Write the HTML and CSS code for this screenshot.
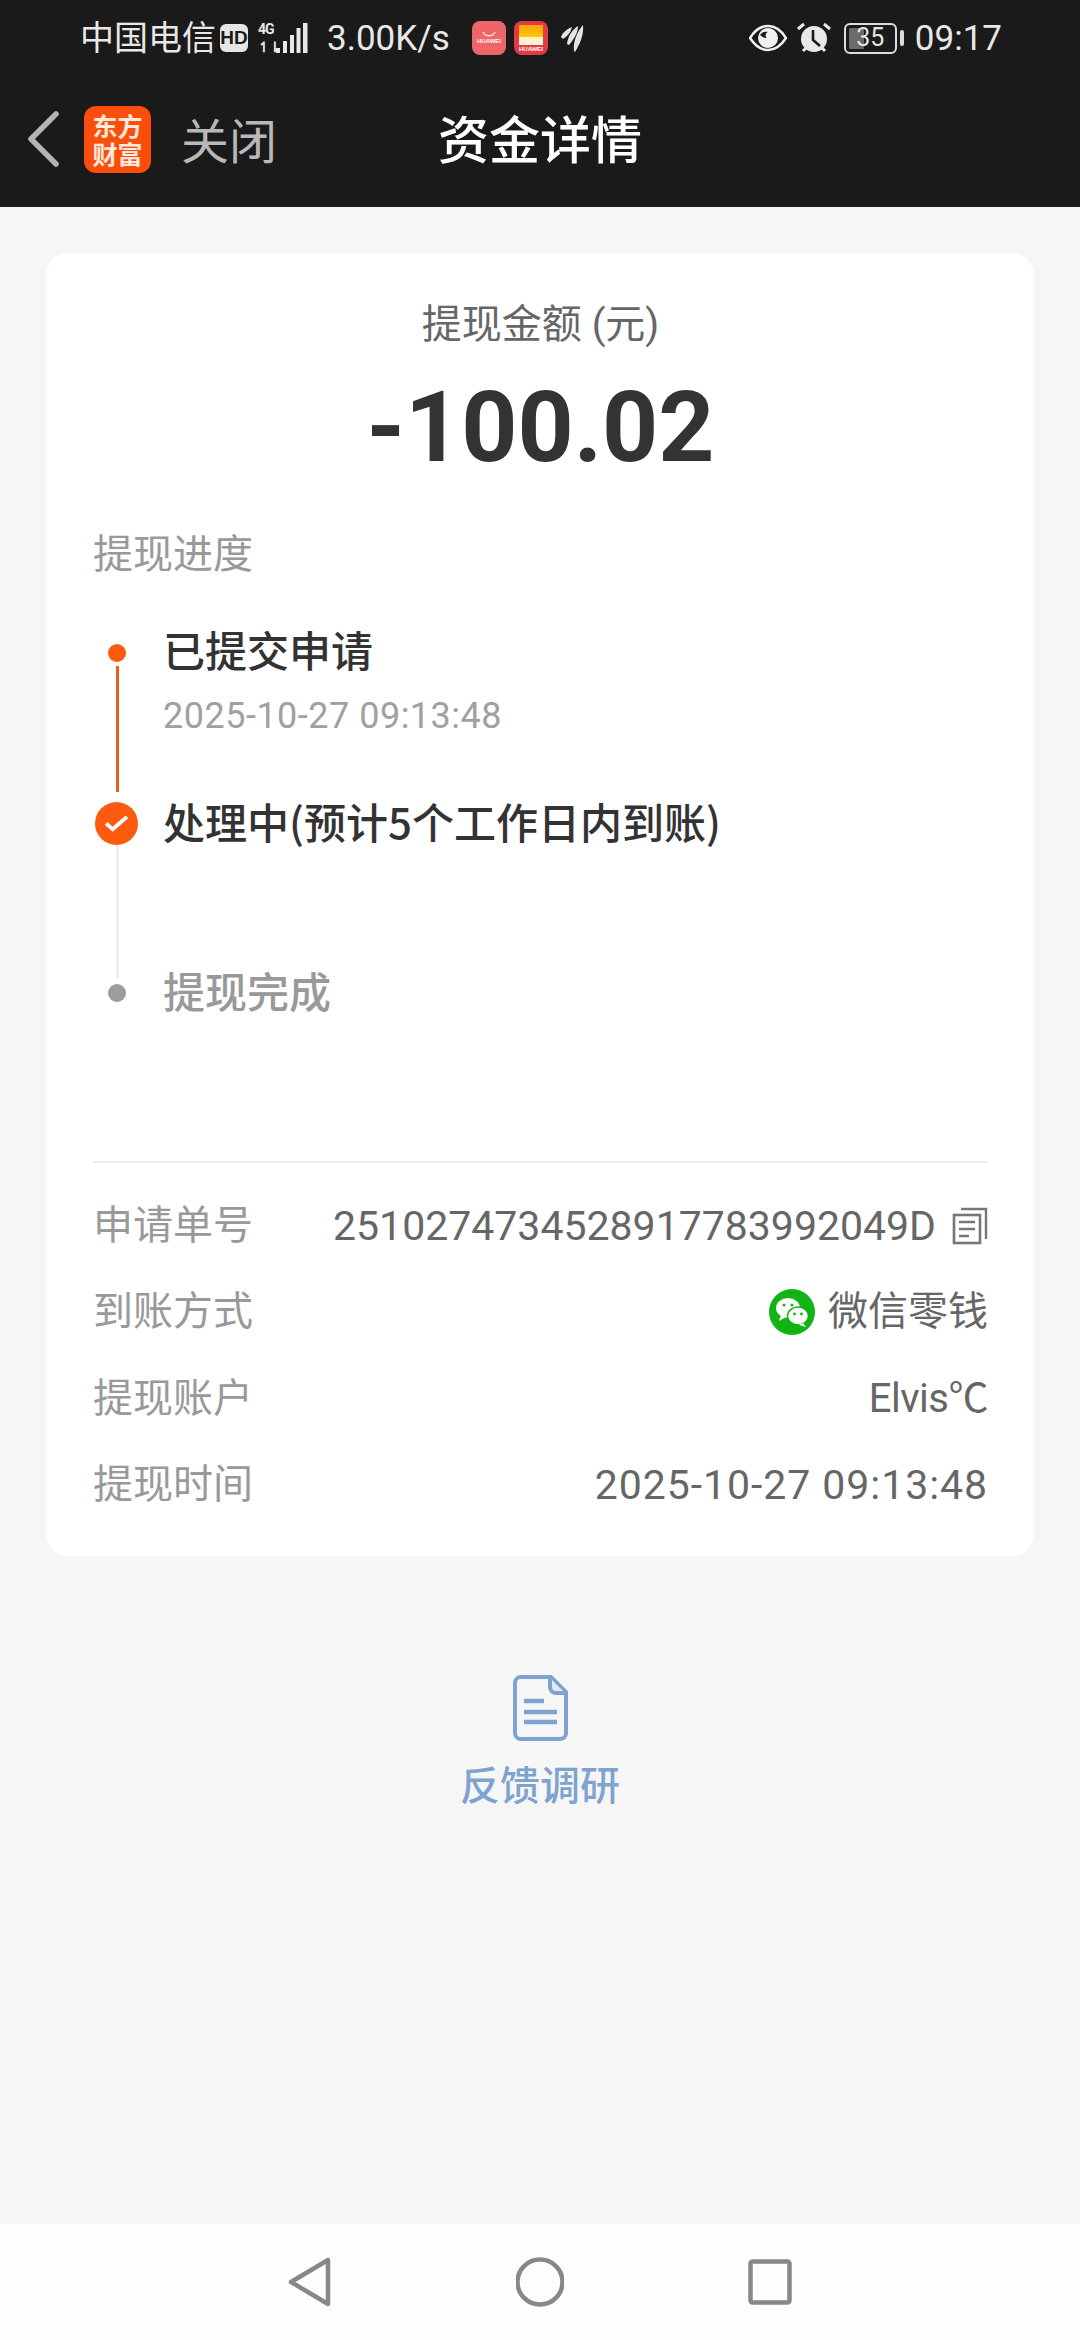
FILE: index.html
```html
<!DOCTYPE html>
<html lang="zh-CN">
<head>
<meta charset="utf-8">
<title>资金详情</title>
<link rel="stylesheet" href="styles.css">
</head>
<body>
<div class="page">
  <header class="header">
    <div class="status">
      <div class="status-left">
        <span class="carrier">中国电信</span>
        <span class="hd">HD</span>
        <span class="net"><span class="net-label"><i>4G</i><i>↿⇂</i></span>
          <svg class="bars" width="32" height="32" viewBox="0 0 32 32"><path d="M0 26h4v5H0zM7 19h4v12H7zM14 13h4v18h-4zM20.500 6h4v25h-4zM27 1h4.500v30H27z" fill="#e8e8e8"/></svg>
        </span>
        <span class="speed">3.00K/s</span>
        <span class="app app-red"><svg width="14" height="6" viewBox="0 0 14 6"><path d="M1 1c2 5 10 5 12 0" fill="none" stroke="#ffd5d5" stroke-width="1.500"/></svg><span class="app-label">HUAWEI</span></span>
        <span class="app app-wallet"><span class="wallet-band"></span><span class="app-label">HUAWEI</span></span>
        <svg class="feather" width="24" height="30" viewBox="0 0 24 30"><path d="M1 14C3 9 7 6 12 4c-1 5-4 9-9 12zM7 21C8 13 12 7 18 3c0 7-4 13-9 19zM14 28c-1-10 3-19 9-26 1 10-3 19-8 27z" fill="#e4e4e4"/></svg>
      </div>
      <div class="status-right">
        <svg width="38" height="28" viewBox="0 0 38 28"><path d="M1 14C6 6 12 2 19 2s13 4 18 12c-5 8-11 12-18 12S6 22 1 14z" fill="none" stroke="#f0f0f0" stroke-width="2.600"/><circle cx="19" cy="14" r="10" fill="#f0f0f0"/><path d="M11 11c2-3 5-4 8-3-3 1-3 5-1 6-3 0-5-1-7-3z" fill="#1a1a1a"/></svg>
        <svg class="alarm" width="36" height="34" viewBox="0 0 36 34"><circle cx="18" cy="18" r="13" fill="#e8e8e8"/><path d="M17 9v10l7 6" fill="none" stroke="#1a1a1a" stroke-width="2.600"/><path d="M2 8l6-5M34 8l-6-5M7 30l3-3M29 30l-3-3" stroke="#e8e8e8" stroke-width="3"/></svg>
        <span class="battery"><span class="battery-body"><span class="battery-fill"></span><span class="battery-num">35</span></span><span class="battery-tip"></span></span>
        <span class="clock">09:17</span>
      </div>
    </div>
    <nav class="nav">
      <svg class="back" width="34" height="58" viewBox="0 0 34 58"><path d="M30 4L5 29l25 25" fill="none" stroke="#b4b4b4" stroke-width="5.500" stroke-linecap="round" stroke-linejoin="round"/></svg>
      <span class="logo">东方<br>财富</span>
      <span class="close">关闭</span>
      <h1 class="title">资金详情</h1>
    </nav>
  </header>

  <main class="main">
    <section class="card">
      <div class="amount-label">提现金额 (元)</div>
      <div class="amount">-100.02</div>
      <div class="progress-label">提现进度</div>
      <ol class="steps">
        <li class="step step-done">
          <span class="rail"><span class="dot dot-orange"></span><span class="line line-orange"></span></span>
          <div class="step-text"><div class="step-title">已提交申请</div><div class="step-time">2025-10-27 09:13:48</div></div>
        </li>
        <li class="step step-current">
          <span class="rail"><span class="check"><svg width="26" height="20" viewBox="0 0 26 20"><path d="M2 10l7 6L24 3" fill="none" stroke="#fff" stroke-width="4"/></svg></span><span class="line line-gray"></span></span>
          <div class="step-text"><div class="step-title">处理中(预计5个工作日内到账)</div></div>
        </li>
        <li class="step step-todo">
          <span class="rail"><span class="dot dot-gray"></span></span>
          <div class="step-text"><div class="step-title muted">提现完成</div></div>
        </li>
      </ol>
      <dl class="details">
        <div class="row"><dt>申请单号</dt><dd class="order">2510274734528917783992049D
          <svg class="copy" width="36" height="38" viewBox="0 0 36 38"><path d="M9 2h25v30" fill="none" stroke="#777" stroke-width="2.400"/><rect x="2" y="8" width="26" height="28" fill="none" stroke="#777" stroke-width="2.600"/><path d="M7 15h16M7 22h16M7 29h10" stroke="#777" stroke-width="2.400"/></svg></dd></div>
        <div class="row"><dt>到账方式</dt><dd>
          <svg class="wechat" width="46" height="46" viewBox="0 0 46 46"><circle cx="23" cy="23" r="23" fill="#12b312"/><ellipse cx="19" cy="19" rx="12" ry="10" fill="#fff"/><path d="M12 26l-2 6 7-4z" fill="#fff"/><ellipse cx="29" cy="27" rx="10.500" ry="9" fill="#fff" stroke="#12b312" stroke-width="1.500"/><path d="M34 34l3 4-7-2z" fill="#fff"/><circle cx="15" cy="16" r="1.500" fill="#12b312"/><circle cx="23" cy="16" r="1.500" fill="#12b312"/><circle cx="25.500" cy="25" r="1.400" fill="#12b312"/><circle cx="32.500" cy="25" r="1.400" fill="#12b312"/></svg>
          微信零钱</dd></div>
        <div class="row"><dt>提现账户</dt><dd class="account">Elvis℃</dd></div>
        <div class="row"><dt>提现时间</dt><dd class="date">2025-10-27 09:13:48</dd></div>
      </dl>
    </section>
    <div class="survey">
      <svg width="56" height="66" viewBox="0 0 56 66"><path d="M9 2h30l15 15v41a6 6 0 0 1-6 6H9a6 6 0 0 1-6-6V8a6 6 0 0 1 6-6z" fill="none" stroke="#7fa3cf" stroke-width="4"/><path d="M38 3v9a6 6 0 0 0 6 6h9" fill="#e4ebf4" stroke="#7fa3cf" stroke-width="4"/><path d="M12 26h20M12 37h33M12 47h33" stroke="#7fa3cf" stroke-width="4.500"/></svg>
      <span class="survey-label">反馈调研</span>
    </div>
  </main>

  <footer class="softkeys">
    <svg width="44" height="50" viewBox="0 0 44 50"><path d="M3 25L40 3v44z" fill="none" stroke="#888" stroke-width="4.500" stroke-linejoin="round"/></svg>
    <svg width="48" height="50" viewBox="0 0 48 50"><circle cx="24" cy="25" r="22.500" fill="none" stroke="#888" stroke-width="4.500"/></svg>
    <svg width="44" height="46" viewBox="0 0 44 46"><rect x="2.500" y="2.500" width="39" height="41" rx="2" fill="none" stroke="#888" stroke-width="4.500"/></svg>
  </footer>
</div>
</body>
</html>
```
FILE: styles.css
```css
* { box-sizing: border-box; }
html, body { margin: 0; padding: 0; }
body {
  width: 1080px;
  height: 2340px;
  overflow: hidden;
  font-family: Roboto, "Noto Sans CJK SC", sans-serif;
  color: #333;
  background: #f6f6f6;
}
.page { display: flex; flex-direction: column; height: 2340px; }

.header { height: 207px; background: #1a1a1a; flex: none; }
.status {
  height: 74px;
  padding: 2px 78px 0 80px;
  display: flex;
  justify-content: space-between;
  align-items: center;
  color: #e8e8e8;
}
.status-left, .status-right { display: flex; align-items: center; }
.carrier { font-size: 34px; line-height: 40px; width: 136px; white-space: nowrap; }
.hd {
  width: 28px; height: 28px; margin-left: 4px;
  background: #e6e6e6; color: #1a1a1a;
  border-radius: 6px;
  font: 700 19px/28px "Liberation Sans", sans-serif;
  text-align: center;
}
.net { display: flex; align-items: center; margin-left: 10px; }
.net-label { display: flex; flex-direction: column; gap: 4px; font-size: 14px; line-height: 14px; font-weight: 700; width: 18px; }
.net-label i { font-style: normal; letter-spacing: -1px; white-space: nowrap; }
.bars { margin-left: 0; }
.speed { font-size: 35px; margin-left: 19px; width: 124px; white-space: nowrap; }
.app {
  width: 34px; height: 34px; margin-left: 21px;
  border-radius: 8px;
  display: flex; flex-direction: column; justify-content: flex-end; align-items: center;
  overflow: hidden;
}
.app + .app { margin-left: 8px; }
.app-red { background: #ef6668; justify-content: center; }
.app-wallet { background: #e63946; padding-top: 4px; justify-content: flex-start; }
.wallet-band { width: 24px; height: 20px; background: linear-gradient(#fca311 0, #ffc800 60%, #fff3cf 60%); }
.app-label { font: 700 6px/8px "Liberation Sans", sans-serif; color: #fff; }
.feather { margin-left: 12px; }
.status-right svg { margin-right: 9px; }
.status-right .alarm { margin-right: 12px; }
.battery { display: flex; align-items: center; margin-right: 11px; }
.battery-body {
  width: 53px; height: 31px;
  border: 2.5px solid #ddd; border-radius: 6px;
  position: relative;
  display: flex; align-items: center; justify-content: center;
}
.battery-fill { position: absolute; left: 3px; top: 3px; bottom: 3px; width: 15px; background: #6a6a6a; border-radius: 1px; }
.battery-num { position: relative; font-size: 25px; line-height: 28px; color: #e4e4e4; }
.battery-tip { width: 4px; height: 16px; margin-left: 3px; background: #ddd; border-radius: 2px; }
.clock { font-size: 35px; color: #e8e8e8; }

.nav { height: 133px; position: relative; display: flex; align-items: center; padding: 0 0 6px 26px; }
.back { flex: none; margin-top: 2px; }
.logo {
  width: 67px; height: 67px; margin-left: 24px; margin-top: 3px;
  background: #fa4e0d; border-radius: 12px;
  color: #ffe9dc;
  font: 700 25px/28px "Noto Sans CJK SC", sans-serif;
  text-align: center;
  padding-top: 5px;
}
.close { margin-left: 30px; font-size: 48px; color: #b8b8b8; font-family: "Noto Sans CJK SC", sans-serif; line-height: 60px; }
.title {
  position: absolute; left: 50%; top: 28px;
  transform: translateX(-50%);
  margin: 0; white-space: nowrap;
  font: 500 51px/70px "Noto Sans CJK SC", sans-serif;
  color: #fff;
}

.main { flex: 1; padding: 46px 46px 0; }
.card {
  height: 1303px;
  background: #fff;
  border-radius: 22px;
  padding: 44px 46px 0 47px;
  display: flex; flex-direction: column;
}
.amount-label { text-align: center; font-size: 40px; line-height: 56px; color: #666; }
.amount { text-align: center; font-size: 98px; line-height: 110px; font-weight: 700; margin-top: 20px; color: #333; }
.progress-label { font-size: 40px; line-height: 56px; color: #999; margin-top: 44px; }

.steps { list-style: none; margin: 37px 0 0; padding: 0; height: 543px; border-bottom: 2px solid #eee; }
.step { display: flex; position: relative; }
.step-done { height: 172px; }
.step-current { height: 169px; }
.rail { width: 70px; flex: none; position: relative; }
.dot { position: absolute; left: 15px; top: 24px; width: 18px; height: 18px; border-radius: 50%; }
.dot-orange { background: #fb5a0f; }
.dot-gray { background: #9c9c9c; top: 23px; }
.line { position: absolute; width: 3px; left: 23px; }
.line-orange { background: #e4611f; top: 46px; bottom: 0; }
.line-gray { background: #ececec; top: 40px; height: 146px; }
.check {
  position: absolute; left: 2px; top: 10px; width: 43px; height: 43px;
  background: #fb5a0f; border-radius: 50%;
  display: flex; align-items: center; justify-content: center;
  z-index: 1;
}
.check svg { width: 25px; height: 19px; }
.step-title { font-size: 42px; line-height: 58px; color: #333; font-weight: 500; font-family: "Noto Sans CJK SC", Roboto, sans-serif; white-space: nowrap; }
.step-title.muted { color: #999; }
.step-time { font-size: 36px; line-height: 48px; color: #a0a0a0; margin-top: 14px; letter-spacing: .5px; white-space: nowrap; }

.details { margin: 31.5px 0 0; display: flex; flex-direction: column; gap: 28.5px; }
.row { display: flex; justify-content: space-between; align-items: center; height: 62px; margin-top: -4px; }
.row:first-child { margin-top: 0; }
.row dt { font-size: 40px; color: #999; line-height: 56px; }
.row dd { margin: 0; font-size: 40px; line-height: 56px; color: #666; display: flex; align-items: center; white-space: nowrap; }
.row dd.order { font-size: 41px; }
.row dd.account { letter-spacing: -.5px; }
.row dd.date { font-size: 41px; letter-spacing: .95px; }
.copy { margin-left: 16px; }
.wechat { margin-right: 13px; }

.survey { display: flex; flex-direction: column; align-items: center; margin-top: 119px; }
.survey-label { font-size: 40px; line-height: 56px; color: #7fa3cf; margin-top: 14px; font-weight: 500; font-family: "Noto Sans CJK SC", sans-serif; }

.softkeys {
  height: 116px; flex: none;
  background: #fdfdfd;
  display: flex; align-items: center; justify-content: center;
  gap: 184px;
}
```
